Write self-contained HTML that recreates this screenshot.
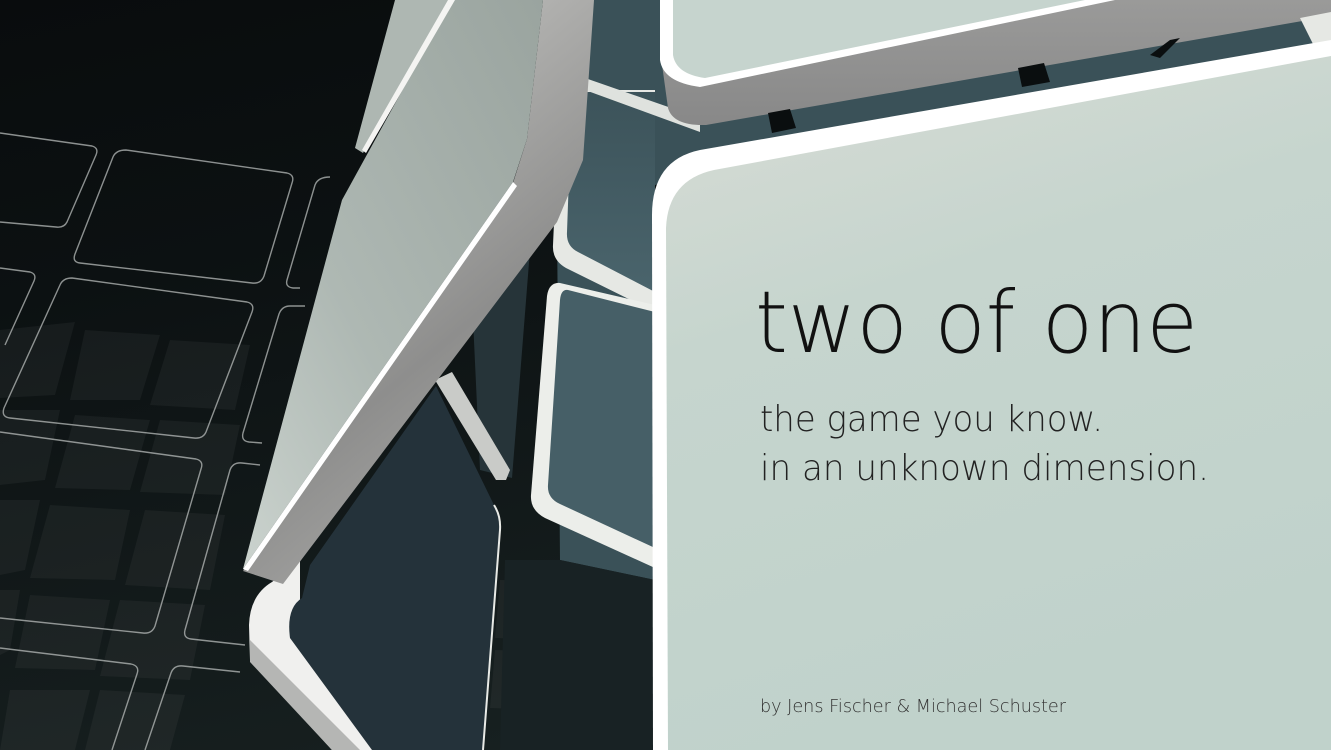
<!DOCTYPE html>
<html><head><meta charset="utf-8"><style>
html,body{margin:0;padding:0;background:#0b0f10;}
svg{display:block}
</style></head><body>
<svg width="1331" height="750" viewBox="0 0 1331 750" xmlns="http://www.w3.org/2000/svg">
<defs>
<linearGradient id="bg" x1="0" y1="0" x2="0.4" y2="1">
<stop offset="0" stop-color="#090c0d"/><stop offset="0.35" stop-color="#0c1112"/><stop offset="1" stop-color="#172020"/>
</linearGradient>
<linearGradient id="side" x1="0" y1="0" x2="0.5" y2="1">
<stop offset="0" stop-color="#f4f4f2"/><stop offset="0.35" stop-color="#b0b0ae"/><stop offset="0.7" stop-color="#8e8e8d"/><stop offset="1" stop-color="#a8a8a6"/>
</linearGradient>
<linearGradient id="face" x1="1" y1="0" x2="0" y2="1">
<stop offset="0" stop-color="#9aa49f"/><stop offset="0.6" stop-color="#aeb8b3"/><stop offset="1" stop-color="#cbd3ce"/>
</linearGradient>
<linearGradient id="big" x1="0" y1="0" x2="0.3" y2="1">
<stop offset="0" stop-color="#d8dcd5"/><stop offset="0.4" stop-color="#c6d5ce"/><stop offset="1" stop-color="#c0d2cb"/>
</linearGradient>
<linearGradient id="teal" x1="0" y1="0" x2="0" y2="1">
<stop offset="0" stop-color="#3c535a"/><stop offset="1" stop-color="#4a646c"/>
</linearGradient>
<linearGradient id="band" x1="0" y1="0" x2="0" y2="1">
<stop offset="0" stop-color="#9a9a99"/><stop offset="1" stop-color="#888888"/>
</linearGradient>
</defs>
<rect width="1331" height="750" fill="url(#bg)"/>
<g fill="#ffffff" fill-opacity="0.045">
<polygon points="0,330 75,322 55,395 0,398"/>
<polygon points="85,330 160,335 140,400 70,400"/>
<polygon points="170,340 250,345 235,410 150,405"/>
<polygon points="0,410 60,410 45,480 0,485"/>
<polygon points="75,415 150,420 130,490 55,488"/>
<polygon points="160,420 240,425 225,495 140,492"/>
<polygon points="0,500 40,500 25,570 0,575"/>
<polygon points="50,505 130,510 115,580 30,578"/>
<polygon points="145,510 225,515 210,590 125,585"/>
<polygon points="0,590 20,590 10,650 0,655"/>
<polygon points="30,595 110,600 95,670 15,668"/>
<polygon points="120,600 205,605 190,680 100,676"/>
<polygon points="10,690 90,690 75,750 0,750"/>
<polygon points="100,690 185,695 170,750 85,750"/>
<polygon points="500,580 560,582 555,640 495,638"/>
<polygon points="565,584 640,586 640,645 560,642"/>
<polygon points="495,650 555,652 550,710 490,708"/>
<polygon points="560,655 640,656 640,715 556,712"/>
</g>
<g fill="none" stroke="#b8bcbb" stroke-opacity="0.75" stroke-width="1.4" stroke-linejoin="round">
<path d="M0,133 L92,146 Q99,148 96,155 L67,222 Q64,228 56,227 L0,222"/>
<path d="M126,150 L287,173 Q295,175 292,183 L264,276 Q261,284 252,283 L80,263 Q72,262 75,254 L113,157 Q116,150 126,150 Z"/>
<path d="M330,177 Q318,177 315,185 L287,280 Q285,287 293,288 L300,288"/>
<path d="M0,268 L30,272 Q37,274 34,281 L5,345"/>
<path d="M72,278 L247,302 Q255,304 252,312 L206,432 Q203,439 194,438 L10,418 Q1,417 4,408 L60,285 Q63,278 72,278 Z"/>
<path d="M305,306 L290,306 Q282,306 279,314 L243,433 Q241,441 249,442 L262,443"/>
<path d="M0,432 L196,459 Q204,461 201,469 L155,626 Q152,634 143,633 L0,618"/>
<path d="M260,465 L242,463 Q233,462 230,470 L185,630 Q183,638 191,639 L245,645"/>
<path d="M0,648 L131,664 Q140,666 137,674 L112,750"/>
<path d="M240,672 L183,666 Q174,665 171,673 L145,750"/>
</g>
<polygon points="555,0 1331,0 1331,45 655,185 655,580 560,560" fill="#3a5158"/>
<polygon points="560,560 655,580 655,750 500,750 505,560" fill="#182224"/>
<path d="M560,90 L655,90 L655,312 L566,268 Q552,260 553,245 Z" fill="#e6e8e4"/>
<path d="M572,92 L655,92 L655,292 L578,252 Q566,246 567,232 Z" fill="url(#teal)"/>
<polygon points="585,78 700,118 700,132 585,90" fill="#dfe2de"/>
<path d="M560,283 L655,305 L655,568 L545,518 Q530,510 531,495 L547,296 Q549,282 560,283 Z" fill="#eceeea"/>
<path d="M568,290 L655,312 L655,548 L560,504 Q547,498 548,485 L560,300 Q561,289 568,290 Z" fill="#465f67"/>
<polygon points="470,255 530,250 512,478 480,470" fill="#263439"/>
<!-- lower dark slab -->
<path d="M300,560 L272,582 Q250,595 249,625 L250,660 L332,750 L380,750 L300,640 Z" fill="#f0f0ee"/>
<path d="M250,640 L250,662 L332,750 L360,750 Z" fill="#b5b6b4"/>
<path d="M310,565 L302,598 Q286,608 290,638 L372,750 L483,750 L500,530 Q501,516 494,505 L436,386 Z" fill="#24323a"/>
<path d="M494,505 Q501,516 500,530 L483,750" fill="none" stroke="#e8eae6" stroke-width="2"/>
<polygon points="435,380 452,372 510,470 506,480 496,480" fill="#c9cbc8"/>
<!-- main slab side -->
<polygon points="243,571 283,584 557,222 583,160 594,0 543,0 527,139 513,183" fill="url(#side)"/>
<polygon points="243,569 342,200 452,0 543,0 527,139 513,182" fill="url(#face)"/>
<polygon points="243,569 513,182 517,186 248,571" fill="#ffffff"/>
<polygon points="355,148 395,0 452,0 363,153" fill="#aeb7b2"/>
<polygon points="362,150 448,0 455,0 366,153" fill="#f4f4f2"/>
<!-- top panel -->
<path d="M660,0 L660,50 L668,108 Q673,126 706,125 L1331,16 L1331,0 Z" fill="url(#band)"/>
<path d="M660,0 L660,60 Q663,82 700,87 L1115,0 Z" fill="#ffffff"/>
<path d="M673,0 L673,55 Q676,74 705,78 L1085,0 Z" fill="#c6d4ce"/>
<polygon points="768,113 790,109 796,128 772,133" fill="#0a0e0f"/>
<polygon points="1018,68 1044,63 1050,82 1022,87" fill="#0a0e0f"/>
<polygon points="1150,55 1170,40 1180,38 1160,58" fill="#0a0e0f"/>
<polygon points="1300,18 1331,12 1331,45 1315,48" fill="#e6e8e4"/>
<!-- big panel -->
<path d="M653,750 L652,215 Q652,160 700,150 L1331,40 L1331,750 Z" fill="#ffffff"/>
<path d="M668,750 L666,228 Q668,180 714,170 L1331,56 L1331,750 Z" fill="url(#big)"/>
<g font-family="DejaVu Sans, Liberation Sans, sans-serif" font-weight="200" fill="#111">
<text x="755" y="352" font-size="86" textLength="443" lengthAdjust="spacingAndGlyphs">two of one</text>
<text x="760" y="431" font-size="36" textLength="343" lengthAdjust="spacingAndGlyphs" fill="#222">the game you know.</text>
<text x="760" y="480" font-size="36" textLength="449" lengthAdjust="spacingAndGlyphs" fill="#222">in an unknown dimension.</text>
<text x="760" y="712" font-size="18" textLength="306" lengthAdjust="spacingAndGlyphs" fill="#333">by Jens Fischer &amp; Michael Schuster</text>
</g>
</svg>
</body></html>
